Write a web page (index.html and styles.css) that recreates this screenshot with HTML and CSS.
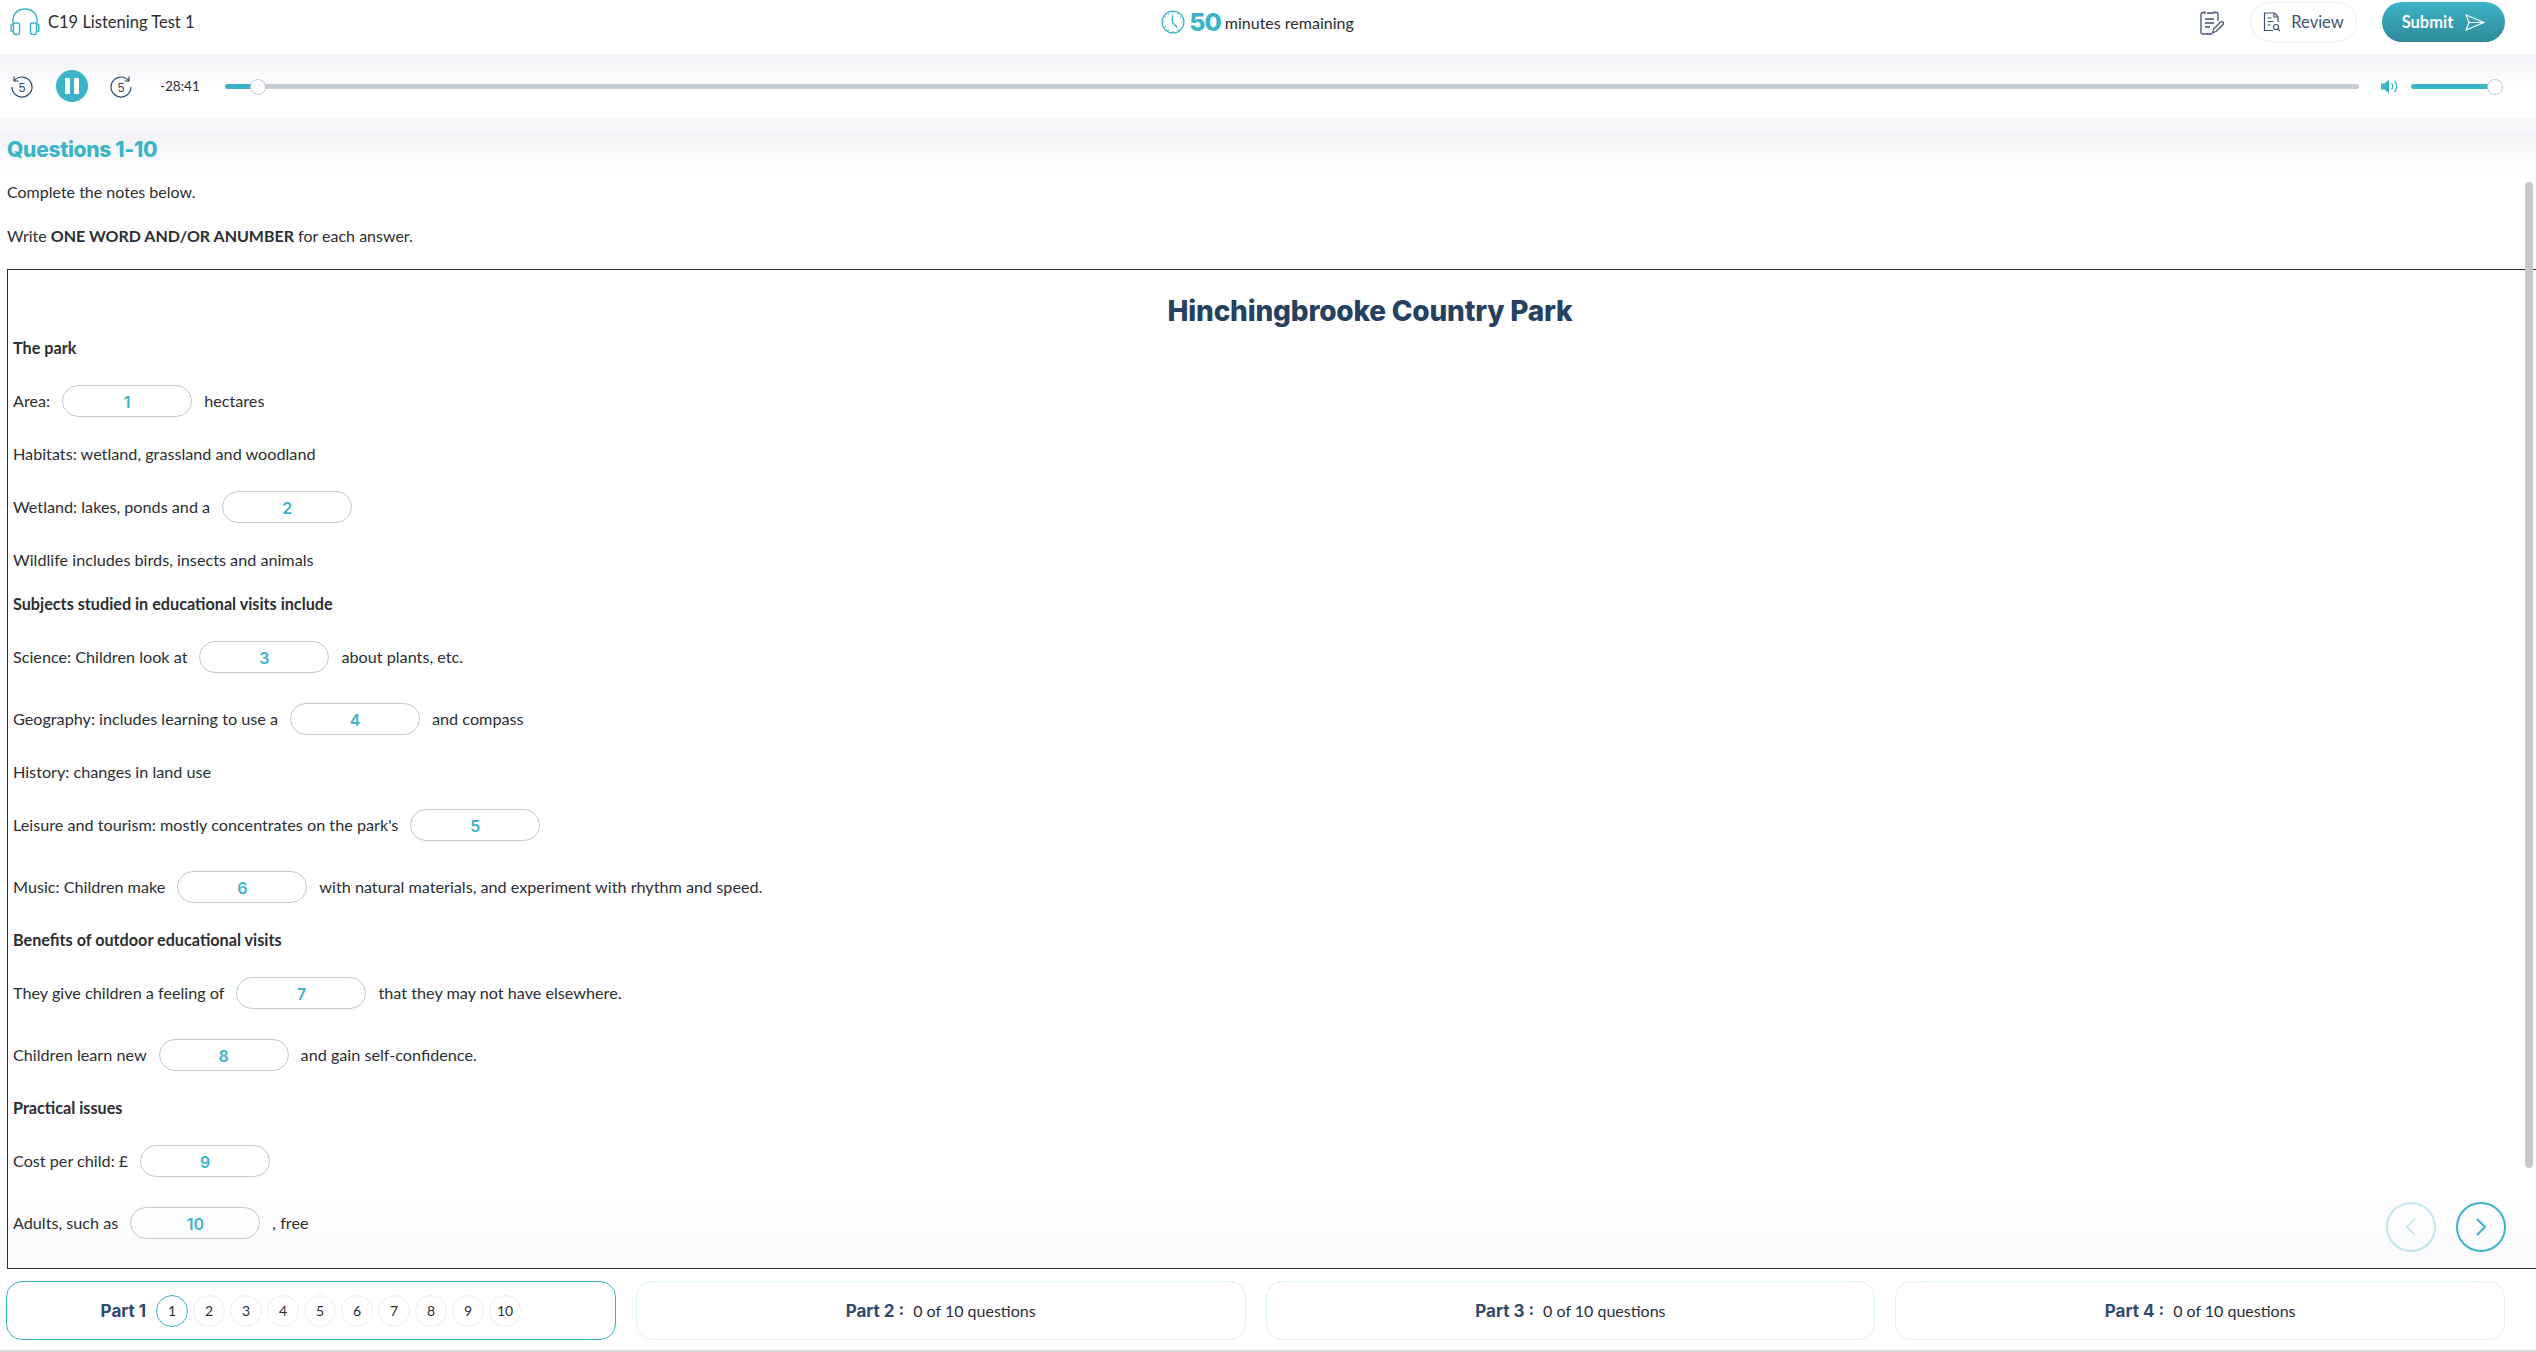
FILE: index.html
```html
<!DOCTYPE html>
<html lang="en">
<head>
    <meta charset="UTF-8">
    <title>C19 Listening Test 1</title>
    <link rel="stylesheet" href="styles.css">
</head>
<body>
    <!-- top bar -->
    <div class="topbar">
        <div class="test-name">
            <svg class="head-icon" width="30" height="28" viewBox="0 0 30 28" fill="none" stroke="#3cb4c8" stroke-width="1.4">
                <path d="M3 16V12.500C3 5.500 8 1 15 1s12 4.500 12 11.500V16"/>
                <rect x="3.500" y="15" width="6" height="11.500" rx="2"/>
                <rect x="20.500" y="15" width="6" height="11.500" rx="2"/>
                <path d="M3.500 17H1.200v6h2.300M26.500 17h2.300v6h-2.300"/>
            </svg>
            <span>C19 Listening Test 1</span>
        </div>
        <div class="timer">
            <svg width="22" height="22" viewBox="0 0 22 22" fill="none" stroke="#3cb4c8" stroke-width="1.100">
                <circle cx="11" cy="11" r="10"/>
                <path d="M10.500 4.500V11.500L15 16" stroke-width="1.300"/>
                <path d="M11 2v1M11 19v1M2 11h1M19 11h1M6.500 3.500l.5.800M15.500 3.500l-.5.800M3.500 6.500l.8.500M3.500 15.500l.8-.5M6.500 18.500l.5-.8M15.500 18.500l-.5-.8M18.500 6.500l-.8.500"/>
            </svg>
            <b>50</b>
            <span>minutes remaining</span>
        </div>
        <div class="actions">
            <svg class="note-icon" width="24" height="25" viewBox="0 0 24 25" fill="none" stroke="#3d5472" stroke-width="1.300">
                <path d="M5 2.500H2.500a1.500 1.500 0 0 0-1.500 1.500v18.500a1.500 1.500 0 0 0 1.500 1.500h10M15 2.500h1.500a1.500 1.500 0 0 1 1.500 1.500v7"/>
                <path d="M5 4V1.500M7 3h6M14 1v3"/>
                <path d="M5 9h9M5 13h9M5 17h5"/>
                <path d="M12.500 22.800l1-3.800 7-7a1.500 1.500 0 0 1 2.500 2.500l-7 7z" stroke-width="1.200"/>
            </svg>
            <button class="review-btn">
                <svg width="18" height="20" viewBox="0 0 18 20" fill="none" stroke="#3d5472" stroke-width="1.200">
                    <path d="M10 18.500H1.500V1h10l3.500 3.500V10"/>
                    <path d="M11 1v4h4M4.500 6h4M4.500 9.500h6M4.500 13h3"/>
                    <circle cx="13" cy="15" r="2.500"/>
                    <path d="M15 17l2 2"/>
                </svg>
                Review
            </button>
            <button class="submit-btn">
                Submit
                <svg width="20" height="17" viewBox="0 0 20 17" fill="none" stroke="#fff" stroke-width="1.200">
                    <path d="M1 1l18 7.500L1 16l3-7.500zM4 8.500h15"/>
                </svg>
            </button>
        </div>
    </div>

    <!-- audio player -->
    <div class="player">
        <svg class="skip" width="24" height="24" viewBox="0 0 24 24" fill="none" stroke="#2f4a6b" stroke-width="1.200">
            <path d="M4 2.500V7h4.500M4.500 6.400A10 10 0 1 1 2 13"/>
            <text x="12" y="17.500" text-anchor="middle" class="skip-num">5</text>
        </svg>
        <div class="pause">
            <i></i><i></i>
        </div>
        <svg class="skip" width="24" height="24" viewBox="0 0 24 24" fill="none" stroke="#2f4a6b" stroke-width="1.200">
            <path d="M20 2.500V7h-4.500M19.500 6.400A10 10 0 1 0 22 13"/>
            <text x="12" y="17.500" text-anchor="middle" class="skip-num">5</text>
        </svg>
        <span class="time">-28:41</span>
        <div class="track progress">
            <div class="fill" style="width: 31px"></div>
            <div class="thumb"></div>
        </div>
        <svg class="vol-icon" width="18" height="15" viewBox="0 0 18 15" fill="none" stroke="#3cb4c8" stroke-width="1.300">
            <path d="M0 4.500h3.500L8 .5v14l-4.500-4H0z" fill="#3cb4c8" stroke="none"/>
            <path d="M10.500 4.500a4 4 0 0 1 0 6M13.500 2a8 8 0 0 1 0 11"/>
        </svg>
        <div class="track volume">
            <div class="fill fill-full"></div>
            <div class="thumb"></div>
        </div>
    </div>

    <!-- questions -->
    <div class="main">
        <h1 class="q-title">Questions 1-10</h1>
        <p class="intro">Complete the notes below.</p>
        <p class="intro">Write <b>ONE WORD AND/OR ANUMBER</b> for each answer.</p>

        <div class="notes">
            <h2>Hinchingbrooke Country Park</h2>
            <p><b>The park</b></p>
            <p class="row">Area: <span class="answer">1</span> hectares</p>
            <p>Habitats: wetland, grassland and woodland</p>
            <p class="row">Wetland: lakes, ponds and a <span class="answer">2</span></p>
            <p>Wildlife includes birds, insects and animals</p>
            <p><b>Subjects studied in educational visits include</b></p>
            <p class="row">Science: Children look at <span class="answer">3</span> about plants, etc.</p>
            <p class="row">Geography: includes learning to use a <span class="answer">4</span> and compass</p>
            <p>History: changes in land use</p>
            <p class="row">Leisure and tourism: mostly concentrates on the park's <span class="answer">5</span></p>
            <p class="row">Music: Children make <span class="answer">6</span> with natural materials, and experiment with rhythm and speed.</p>
            <p><b>Benefits of outdoor educational visits</b></p>
            <p class="row">They give children a feeling of <span class="answer">7</span> that they may not have elsewhere.</p>
            <p class="row">Children learn new <span class="answer">8</span> and gain self-confidence.</p>
            <p><b>Practical issues</b></p>
            <p class="row">Cost per child: £ <span class="answer">9</span></p>
            <p class="row">Adults, such as <span class="answer">10</span> , free</p>
        </div>

        <div class="scrollbar"></div>
        <div class="nav-btns">
            <div class="circle-btn off">
                <svg width="12" height="20" viewBox="0 0 12 20" fill="none" stroke="#3cb4c8" stroke-width="1.600"><path d="M10 2L2 10l8 8"/></svg>
            </div>
            <div class="circle-btn">
                <svg width="12" height="20" viewBox="0 0 12 20" fill="none" stroke="#3cb4c8" stroke-width="2"><path d="M2 2l8 8-8 8"/></svg>
            </div>
        </div>
    </div>

    <!-- parts -->
    <div class="parts">
        <div class="part active">
            <b>Part 1</b>
            <div class="nums">
                <span class="num current">1</span>
                <span class="num">2</span>
                <span class="num">3</span>
                <span class="num">4</span>
                <span class="num">5</span>
                <span class="num">6</span>
                <span class="num">7</span>
                <span class="num">8</span>
                <span class="num">9</span>
                <span class="num">10</span>
            </div>
        </div>
        <div class="part"><b>Part 2 :</b> <span>0 of 10 questions</span></div>
        <div class="part"><b>Part 3 :</b> <span>0 of 10 questions</span></div>
        <div class="part"><b>Part 4 :</b> <span>0 of 10 questions</span></div>
    </div>
</body>
</html>
```

FILE: styles.css
```css
html, body {
    height: 100%;
}
body {
    margin: 0;
    height: 1352px;
    overflow: hidden;
    display: flex;
    flex-direction: column;
    font-family: Lato, "Open Sans", sans-serif;
    font-size: 16.200px;
    color: #2b2e33;
    background-color: #f6f7f9;
}
/* top bar */
.topbar {
    height: 54px;
    flex: none;
    display: grid;
    grid-template-columns: 1fr auto 1fr;
    align-items: center;
    padding: 0 31px 10px 10px;
    box-sizing: border-box;
    background-color: #fff;
}
.test-name {
    display: flex;
    align-items: center;
    gap: 8px;
    font-size: 16.500px;
}
.timer {
    display: flex;
    align-items: center;
    gap: 4px;
    font-size: 16px;
}
.timer svg {
    width: 24px;
    height: 24px;
}
.timer b {
    font-family: Inter, sans-serif;
    font-size: 25px;
    color: #3cb4c8;
    font-weight: 800;
    letter-spacing: -1px;
}
.actions {
    display: flex;
    align-items: center;
    justify-content: flex-end;
    font-size: 16.500px;
}
.note-icon {
    margin-right: 26px;
}
.review-btn {
    width: 107px;
    height: 40px;
    border: 1px solid #ebedf0;
    border-radius: 20px;
    background: #fff;
    color: #3d5472;
    font: inherit;
    display: flex;
    align-items: center;
    justify-content: center;
    gap: 10px;
    padding: 0;
    margin-right: 25px;
}
.submit-btn {
    width: 123px;
    height: 40px;
    border: none;
    border-radius: 20px;
    background: linear-gradient(#3cb4c6, #2f8a9b);
    color: #fff;
    font: inherit;
    font-weight: 700;
    display: flex;
    align-items: center;
    justify-content: center;
    gap: 12px;
    padding: 0;
}
/* audio player */
.player {
    height: 64px;
    flex: none;
    display: flex;
    align-items: center;
    padding: 0 39px 0 10px;
    box-sizing: border-box;
    background: linear-gradient(#f3f4f7, #fff 60%);
}
.skip-num {
    font-family: "Liberation Sans", sans-serif;
    font-size: 12px;
    fill: #2f4a6b;
    stroke: none;
}
.pause {
    width: 32px;
    height: 32px;
    border-radius: 50%;
    background-color: #3cb4c8;
    margin: 0 21px 0 22px;
    display: flex;
    align-items: center;
    justify-content: center;
    gap: 4px;
}
.pause i {
    width: 5px;
    height: 16px;
    border-radius: 1px;
    background-color: #fff;
}
.time {
    font-size: 13.500px;
    margin-left: 27px;
    width: 65px;
}
.track {
    height: 5px;
    border-radius: 3px;
    position: relative;
    display: flex;
}
.progress {
    flex: 1;
    background-color: #c6ccd6;
}
.volume {
    width: 86px;
    margin-left: 12px;
}
.fill {
    background-color: #3cb4c8;
    border-radius: 3px;
}
.fill-full {
    flex: 1;
}
.vol-icon {
    margin-left: 22px;
}
.thumb {
    width: 14px;
    height: 14px;
    border-radius: 50%;
    background-color: #fff;
    border: 1px solid #c4c8ce;
    margin: -5px 0 0 -6px;
    flex: none;
}
.volume .thumb {
    margin-right: -6px;
}
/* questions */
.main {
    flex: 1;
    margin-top: 14px;
    padding: 0 0 0 7px;
    min-height: 0;
    position: relative;
    overflow: hidden;
    background: linear-gradient(#f2f3f6, #fff 44px, #fff 1060px, #f8f9fa);
}
.q-title {
    font-family: Inter, sans-serif;
    font-size: 21px;
    font-weight: 800;
    letter-spacing: -0.3px;
    line-height: 26px;
    color: #3cb4c8;
    margin: 5px 0 18px;
}
.intro {
    margin: 0 0 22px;
    line-height: 22px;
    font-size: 16px;
}
.notes {
    width: 2726px;
    box-sizing: border-box;
    border: 1px solid #2b2e33;
    padding: 0 5px;
    height: 1000px;
}
.notes h2 {
    font-family: Inter, sans-serif;
    font-size: 28px;
    font-weight: 800;
    letter-spacing: -0.2px;
    line-height: 34px;
    color: #25415f;
    text-align: center;
    margin: 24px 0 9px;
}
.notes p {
    margin: 0 0 22px;
    line-height: 22px;
}
.notes .row {
    height: 40px;
    display: flex;
    align-items: center;
    gap: 12px;
}
.answer {
    font-family: Inter, sans-serif;
    font-size: 16px;
    font-weight: 600;
    width: 130px;
    height: 32px;
    box-sizing: border-box;
    border: 1px solid #c0c8d5;
    border-radius: 16px;
    color: #3cb4c8;
    display: flex;
    align-items: center;
    justify-content: center;
    padding-top: 2px;
}
.scrollbar {
    position: absolute;
    top: 50px;
    right: 3px;
    width: 8px;
    height: 986px;
    border-radius: 4px;
    background-color: #c8c8c8;
}
.nav-btns {
    position: absolute;
    top: 1070px;
    right: 30px;
    display: flex;
    gap: 20px;
}
.circle-btn {
    width: 50px;
    height: 50px;
    box-sizing: border-box;
    border: 2px solid #3cb4c8;
    border-radius: 50%;
    display: flex;
    align-items: center;
    justify-content: center;
}
.circle-btn.off {
    opacity: 0.3;
}
/* parts */
.parts {
    height: 82px;
    flex: none;
    box-sizing: border-box;
    padding: 11px 31px 10px 6px;
    border-bottom: 2px solid #d8d8d8;
    background-color: #fff;
    display: grid;
    grid-template-columns: repeat(4, 1fr);
    gap: 20px;
}
.part {
    border: 1px solid #dff2f5;
    border-radius: 16px;
    display: flex;
    align-items: center;
    justify-content: center;
    gap: 9px;
    font-size: 16px;
}
.part.active {
    border-color: #3cb4c8;
}
.part b {
    font-family: Inter, sans-serif;
    font-size: 17px;
    font-weight: 700;
    color: #2f4a6b;
}
.nums {
    display: flex;
    gap: 5px;
    margin-left: 1px;
}
.num {
    width: 32px;
    height: 32px;
    box-sizing: border-box;
    border: 1px solid #eceef0;
    border-radius: 50%;
    font-size: 14px;
    display: flex;
    align-items: center;
    justify-content: center;
}
.num.current {
    border-color: #3cb4c8;
}
```
